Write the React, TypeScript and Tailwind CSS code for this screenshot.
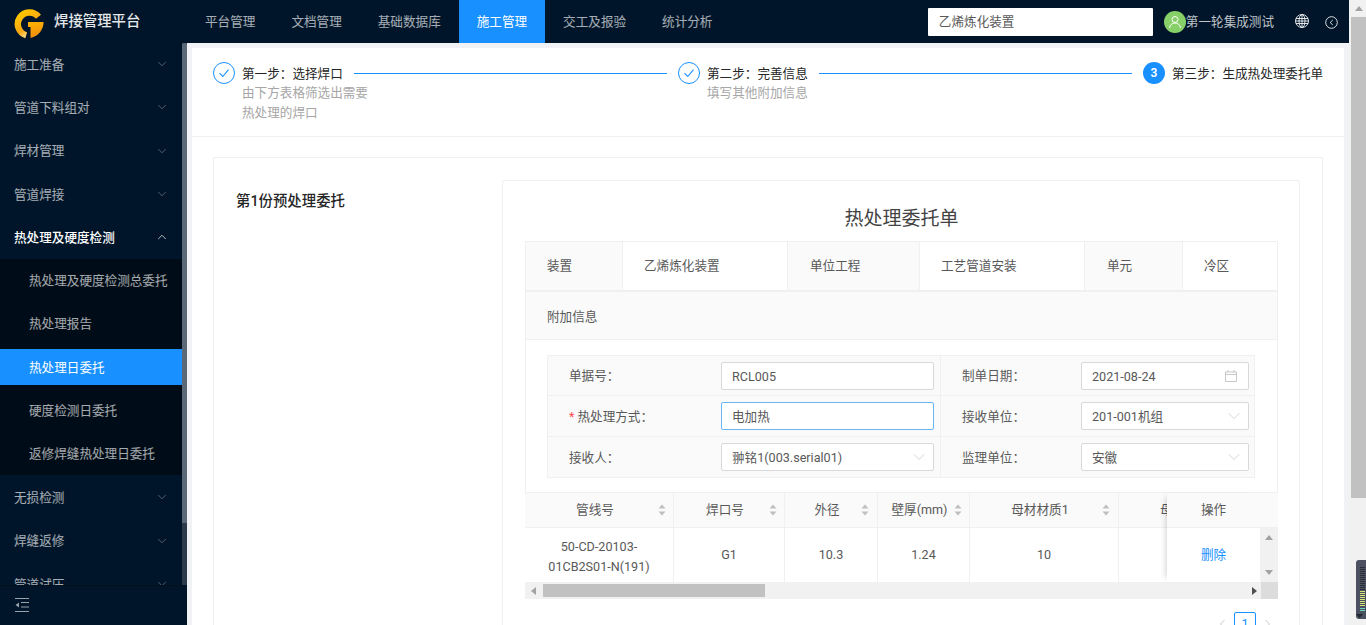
import { ChevronDown, ChevronUp } from 'lucide-react'

const topNav = [
  { label: '平台管理' },
  { label: '文档管理' },
  { label: '基础数据库' },
  { label: '施工管理', active: true },
  { label: '交工及报验' },
  { label: '统计分析' },
]

const menuBefore = ['施工准备', '管道下料组对', '焊材管理', '管道焊接']
const subMenu = [
  { label: '热处理及硬度检测总委托' },
  { label: '热处理报告' },
  { label: '热处理日委托', active: true },
  { label: '硬度检测日委托' },
  { label: '返修焊缝热处理日委托' },
]
const menuAfter = ['无损检测', '焊缝返修', '管道试压']

const columns = [
  { title: '管线号', width: 'w-[149px]', sortClass: 'pr-[7px]' },
  { title: '焊口号', width: 'w-[111px]', sortClass: 'pr-[7px]' },
  { title: '外径', width: 'w-[93px]', sortClass: 'pr-[8px]' },
  { title: '壁厚(mm)', width: 'w-[92px]', sortClass: 'pr-[7px]' },
  { title: '母材材质1', width: 'w-[149px]', sortClass: 'pr-[8px]' },
]

function Logo() {
  return (
    <svg width="32" height="32" viewBox="0 0 32 32" className="mt-[4px] shrink-0">
      <defs>
        <linearGradient id="logoRing" x1="0.1" y1="0.1" x2="0.7" y2="1">
          <stop offset="0" stopColor="#ffc400" />
          <stop offset="0.6" stopColor="#f7a713" />
          <stop offset="1" stopColor="#fff0b0" />
        </linearGradient>
        <linearGradient id="logoBar" x1="0" y1="0" x2="0.2" y2="1">
          <stop offset="0" stopColor="#ffb300" />
          <stop offset="1" stopColor="#f08c10" />
        </linearGradient>
      </defs>
      <path d="M25.5 8.8 A11.6 11.6 0 1 0 13.2 27.2" fill="none" stroke="url(#logoRing)" strokeWidth="6.4" />
      <path d="M15 14 H30.6 C30.6 21 26 28 17.5 30 V19 H15 Z" fill="url(#logoBar)" />
    </svg>
  )
}

function CheckCircle() {
  return (
    <svg width="22" height="22" viewBox="0 0 22 22" className="shrink-0">
      <circle cx="11" cy="11" r="10.5" fill="none" stroke="#1890ff" />
      <path d="M6.5 11.2 L9.8 14.5 L15.5 7.6" fill="none" stroke="#1890ff" strokeWidth="1.1" />
    </svg>
  )
}

function SortIcon() {
  return (
    <svg width="8" height="12" viewBox="0 0 8 12" className="shrink-0">
      <path d="M4 0.5 L7.5 4.5 H0.5 Z" fill="#bfbfbf" />
      <path d="M4 11.5 L7.5 7.5 H0.5 Z" fill="#bfbfbf" />
    </svg>
  )
}

function Arrow({ dir, className }: { dir: 'up' | 'down' | 'left' | 'right'; className?: string }) {
  const paths = {
    up: 'M4 1 L8 6 H0 Z',
    down: 'M4 7 L8 2 H0 Z',
    left: 'M1 4 L6 0 V8 Z',
    right: 'M7 4 L2 0 V8 Z',
  }
  return (
    <svg width="8" height="8" viewBox="0 0 8 8" className={className}>
      <path d={paths[dir]} fill="currentColor" />
    </svg>
  )
}

function MenuRow({ label }: { label: string }) {
  return (
    <div className="flex h-[43.33px] items-center justify-between pl-[14px] pr-[13px] pt-[3px] text-[12.6px] text-white/65">
      <span className="whitespace-nowrap">{label}</span>
      <ChevronDown size={14} strokeWidth={1.2} className="-mt-[2px] text-white/45" />
    </div>
  )
}

function Sidebar() {
  return (
    <aside className="flex h-[582px] w-[187px] shrink-0 flex-col bg-[#001529]">
      <div className="flex h-[542px] overflow-hidden">
        <nav className="-mt-[1px] w-[182px] shrink-0">
          {menuBefore.map((m) => (
            <MenuRow key={m} label={m} />
          ))}
          <div className="flex h-[43.33px] items-center justify-between pl-[14px] pr-[13px] pt-[3px] text-[12.6px] font-medium text-white">
            <span>热处理及硬度检测</span>
            <ChevronUp size={14} strokeWidth={1.2} className="-mt-[2px]" />
          </div>
          <div className="bg-[#000c17]">
            {subMenu.map((s) => (
              <div key={s.label} className="flex h-[43.33px] items-center">
                <div
                  className={
                    s.active
                      ? 'flex h-[36px] w-full items-center bg-[#1890ff] pl-[29px] pt-[2px] text-[12.6px] text-white'
                      : 'flex h-[36px] w-full items-center pl-[29px] pt-[2px] text-[12.6px] text-white/65'
                  }
                >
                  {s.label}
                </div>
              </div>
            ))}
          </div>
          {menuAfter.map((m) => (
            <MenuRow key={m} label={m} />
          ))}
        </nav>
        <div className="h-full w-[5px] bg-[#2b3a4b]">
          <div className="h-[480px] rounded-t-[2px] bg-[#5a6878]" />
        </div>
      </div>
      <div className="flex h-[40px] items-center border-t border-[#00101f] pl-[15px]">
        <svg width="14" height="14" viewBox="0 0 14 14" className="-mt-[2px] text-white/60">
          <path
            d="M0 0.5 H14 M6 4.5 H14 M6 9 H14 M0 13.5 H14"
            stroke="currentColor"
            strokeWidth="1"
            fill="none"
          />
          <path d="M0.5 7 L4 4.5 V9.5 Z" fill="currentColor" />
        </svg>
      </div>
    </aside>
  )
}

function Steps() {
  return (
    <div className="flex h-[89px] border-b border-[#f0f0f0] px-[21px] pt-[14px]">
      <div className="flex w-[465px] shrink-0 items-start gap-[7px]">
        <CheckCircle />
        <div className="min-w-0 flex-1">
          <div className="flex h-[22px] items-center text-[12.6px] text-[#262626]">
            <span className="whitespace-nowrap pt-[2px]">第一步：选择焊口</span>
            <span className="mx-[11px] h-px flex-1 bg-[#1890ff]" />
          </div>
          <div className="-mt-px w-[130px] text-[12.6px] leading-[20px] text-[#a6a6a6]">由下方表格筛选出需要热处理的焊口</div>
        </div>
      </div>
      <div className="flex w-[465px] shrink-0 items-start gap-[7px]">
        <CheckCircle />
        <div className="min-w-0 flex-1">
          <div className="flex h-[22px] items-center text-[12.6px] text-[#262626]">
            <span className="whitespace-nowrap pt-[2px]">第二步：完善信息</span>
            <span className="mx-[11px] h-px flex-1 bg-[#1890ff]" />
          </div>
          <div className="-mt-px text-[12.6px] leading-[20px] text-[#a6a6a6]">填写其他附加信息</div>
        </div>
      </div>
      <div className="flex items-start gap-[7px]">
        <div className="flex h-[22px] w-[22px] items-center justify-center rounded-full bg-[#1890ff] text-[12px] font-semibold text-white">
          3
        </div>
        <div className="flex h-[22px] items-center whitespace-nowrap pt-[2px] text-[12.6px] text-[#262626]">第三步：生成热处理委托单</div>
      </div>
    </div>
  )
}

function Label({ children, required }: { children: React.ReactNode; required?: boolean }) {
  return (
    <div className="flex items-center whitespace-nowrap pt-[2px] text-[12.6px] text-[#595959]">
      {required && <span className="mr-[3px] text-[#ff4d4f]">*</span>}
      {children}
    </div>
  )
}

function Field({
  value,
  focused,
  icon,
  className,
}: {
  value: string
  focused?: boolean
  icon?: 'calendar' | 'chevron'
  className: string
}) {
  return (
    <div
      className={`flex h-[28px] items-center justify-between rounded-[2px] border bg-white pl-[10px] pr-[7px] text-[12.6px] text-[#595959] ${
        focused ? 'border-[#69b4f5]' : 'border-[#d9d9d9]'
      } ${className}`}
    >
      <span className="whitespace-nowrap pt-[3px]">{value}</span>
      {icon === 'chevron' && <ChevronDown size={20} strokeWidth={0.8} className="-mr-[3px] text-[#bfbfbf]" />}
      {icon === 'calendar' && (
        <svg width="12" height="12" viewBox="0 0 12 12" className="mr-[4px]">
          <path
            d="M0.5 2 H11.5 V11.5 H0.5 Z M0.5 4.5 H11.5 M3 0 V2.5 M9 0 V2.5"
            fill="none"
            stroke="#c8c8c8"
          />
        </svg>
      )}
    </div>
  )
}

function FormRow({
  left,
  right,
  height,
}: {
  left: React.ReactNode
  right: React.ReactNode
  height: string
}) {
  return (
    <div className={`flex border-b border-[#f0f0f0] last:border-b-0 ${height}`}>
      <div className="flex w-[393px] items-center justify-between border-r border-[#f0f0f0] pl-[21px] pr-[6px]">{left}</div>
      <div className="flex flex-1 items-center justify-between pl-[21px] pr-[5px]">{right}</div>
    </div>
  )
}

function DescriptionTable() {
  return (
    <div className="border border-[#f0f0f0]">
      <div className="flex h-[50px] border-b-2 border-[#f0f0f0] text-[12.6px] text-[#595959]">
        <div className="flex w-[96px] items-center bg-[#fafafa] pl-[21px]">装置</div>
        <div className="flex w-[166px] items-center border-x border-[#f0f0f0] pl-[21px]">乙烯炼化装置</div>
        <div className="flex w-[131px] items-center bg-[#fafafa] pl-[22px]">单位工程</div>
        <div className="flex w-[166px] items-center border-x border-[#f0f0f0] pl-[21px]">工艺管道安装</div>
        <div className="flex w-[97px] items-center bg-[#fafafa] pl-[22px]">单元</div>
        <div className="flex flex-1 items-center border-l border-[#f0f0f0] pl-[21px]">冷区</div>
      </div>
      <div className="flex h-[48px] items-center border-b border-[#f0f0f0] bg-[#fafafa] pl-[21px] pt-[3px] text-[12.6px] text-[#595959]">附加信息</div>
      <div className="pb-[14px] pl-[21px] pr-[22px] pt-[15px]">
        <div className="border border-[#f0f0f0] bg-[#fafafa]">
          <FormRow
            height="h-[40px]"
            left={
              <>
                <Label>单据号：</Label>
                <Field value="RCL005" className="w-[213px]" />
              </>
            }
            right={
              <>
                <Label>制单日期：</Label>
                <Field value="2021-08-24" icon="calendar" className="w-[168px]" />
              </>
            }
          />
          <FormRow
            height="h-[41px]"
            left={
              <>
                <Label required>热处理方式：</Label>
                <Field value="电加热" focused className="w-[213px]" />
              </>
            }
            right={
              <>
                <Label>接收单位：</Label>
                <Field value="201-001机组" icon="chevron" className="w-[168px]" />
              </>
            }
          />
          <FormRow
            height="h-[40px]"
            left={
              <>
                <Label>接收人：</Label>
                <Field value="翀铭1(003.serial01)" icon="chevron" className="w-[213px]" />
              </>
            }
            right={
              <>
                <Label>监理单位：</Label>
                <Field value="安徽" icon="chevron" className="w-[168px]" />
              </>
            }
          />
        </div>
      </div>
    </div>
  )
}

function WeldTable() {
  return (
    <div className="relative text-[12.6px] text-[#595959]">
      <div className="flex">
        <div className="w-[735px] overflow-hidden">
          <div className="flex h-[35px] w-[800px] border-b border-[#f0f0f0] bg-[#fafafa]">
            {columns.map((c) => (
              <div key={c.title} className={`relative flex items-center justify-center border-r border-[#f0f0f0] pr-[8px] ${c.width}`}>
                <span className="whitespace-nowrap">{c.title}</span>
                <span className={`absolute right-0 ${c.sortClass}`}>
                  <SortIcon />
                </span>
              </div>
            ))}
            <div className="flex w-[48px] items-center overflow-hidden whitespace-nowrap pl-[41px]">母材材质2</div>
          </div>
          <div className="flex h-[54px] w-[800px] leading-[20px]">
            <div className="flex w-[149px] items-center justify-center border-r border-[#f0f0f0] pt-[3px] text-center">
              50-CD-20103-
              <br />
              01CB2S01-N(191)
            </div>
            <div className="flex w-[111px] items-center justify-center border-r border-[#f0f0f0]">G1</div>
            <div className="flex w-[93px] items-center justify-center border-r border-[#f0f0f0]">10.3</div>
            <div className="flex w-[92px] items-center justify-center border-r border-[#f0f0f0]">1.24</div>
            <div className="flex w-[149px] items-center justify-center border-r border-[#f0f0f0]">10</div>
          </div>
        </div>
        <div className="flex-1">
          <div className="h-[35px] border-b border-[#f0f0f0] bg-[#fafafa]" />
          <div className="flex h-[54px] flex-col items-center justify-between bg-[#f1f1f1] py-[6px] text-[#a3a3a3]">
            <Arrow dir="up" />
            <Arrow dir="down" />
          </div>
        </div>
      </div>
      <div className="flex h-[17px]">
        <div className="flex w-[736px] items-center bg-[#f1f1f1] pl-[5px] text-[#505050]">
          <Arrow dir="left" className="text-[#a3a3a3]" />
          <div className="ml-[5px] h-[13px] w-[222px] bg-[#c1c1c1]" />
          <Arrow dir="right" className="ml-auto mr-[3px]" />
        </div>
        <div className="flex-1 bg-[#dcdcdc]" />
      </div>
      {/* fixed column */}
      <div className="absolute left-[642px] top-0 h-[89px] w-[93px] bg-white shadow-[-5px_0_6px_-4px_rgba(0,0,0,0.18)]">
        <div className="flex h-[35px] items-center justify-center border-b border-[#f0f0f0] bg-[#fafafa]">操作</div>
        <div className="flex h-[54px] items-center justify-center text-[#1890ff]">删除</div>
      </div>
    </div>
  )
}

function Pagination() {
  return (
    <div className="mt-[13px] flex items-center justify-end gap-[6px] pr-[6px] text-[12.6px]">
      <svg width="10" height="10" viewBox="0 0 10 10">
        <path d="M6.5 1 L2.5 5 L6.5 9" fill="none" stroke="#c8c8c8" />
      </svg>
      <div className="flex h-[24px] w-[22px] items-center justify-center rounded-[2px] border border-[#1890ff] text-[#1890ff]">1</div>
      <svg width="10" height="10" viewBox="0 0 10 10">
        <path d="M3.5 1 L7.5 5 L3.5 9" fill="none" stroke="#c8c8c8" />
      </svg>
    </div>
  )
}

export default function App() {
  return (
    <div className="relative flex h-[625px] w-[1366px] overflow-hidden bg-[#f0f2f5] [font-family:Roboto,'Noto_Sans_CJK_SC',sans-serif]">
      <div className="flex w-[1349px] shrink-0 flex-col">
        <header className="flex h-[43px] shrink-0 items-center bg-[#001529] pr-[11px]">
          <div className="flex w-[187px] shrink-0 items-center pl-[13px]">
            <Logo />
            <span className="ml-[9px] whitespace-nowrap text-[14.4px] font-medium text-white/90">焊接管理平台</span>
          </div>
          <nav className="flex h-full flex-1">
            {topNav.map((n) => (
              <div
                key={n.label}
                className={
                  n.active
                    ? 'flex h-full shrink-0 items-center whitespace-nowrap bg-[#1890ff] px-[18px] pt-[2px] text-[12.6px] text-white'
                    : 'flex h-full shrink-0 items-center whitespace-nowrap px-[18px] pt-[2px] text-[12.6px] text-white/65'
                }
              >
                {n.label}
              </div>
            ))}
          </nav>
          <div className="flex h-[28px] w-[225px] items-center rounded-[1px] bg-white pl-[11px] pt-[2px] text-[12.6px] text-[#595959]">
            乙烯炼化装置
          </div>
          <div className="ml-[11px] flex h-[22px] w-[22px] items-center justify-center rounded-full bg-[#87d068]">
            <svg width="14" height="14" viewBox="0 0 14 14" fill="none" stroke="white" strokeWidth="1">
              <circle cx="7" cy="4.5" r="3" />
              <path d="M1.5 13 C2 9.5 4.5 8 7 8 C9.5 8 12 9.5 12.5 13" />
            </svg>
          </div>
          <span className="whitespace-nowrap pt-[2px] text-[12.6px] text-white/75">第一轮集成测试</span>
          <svg width="14" height="14" viewBox="0 0 14 14" fill="none" stroke="white" strokeOpacity="0.85" className="-mt-[2px] ml-[21px]">
            <circle cx="7" cy="7" r="6.5" />
            <ellipse cx="7" cy="7" rx="3" ry="6.5" />
            <path d="M7 0.5 V13.5 M1 4.5 H13 M1 9.5 H13 M0.5 7 H13.5" />
          </svg>
          <svg width="13" height="13" viewBox="0 0 13 13" fill="none" stroke="white" strokeOpacity="0.85" className="ml-[16px] mt-[1px]">
            <circle cx="6.5" cy="6.5" r="5.8" />
            <path d="M7.8 4 L5.2 6.5 L7.8 9" />
          </svg>
        </header>
        <div className="flex min-h-0 flex-1">
          <Sidebar />
          <main className="ml-[5px] mt-[5px] h-[640px] w-[1152px] shrink-0 bg-white">
            <Steps />
            <div className="mx-[21px] mt-[20px] flex h-[480px] rounded-[2px] border border-[#f0f0f0] pl-[22px] pr-[22px] pt-[22px]">
              <div className="w-[266px] shrink-0 pt-[12px] text-[14.4px] font-medium leading-[20px] text-[#262626]">
                第1份预处理委托
              </div>
              <div className="h-[470px] w-[798px] shrink-0 rounded-[2px] border border-[#f0f0f0] pl-[22px] pr-[21px]">
                <div className="h-[60px] pt-[25px] text-center text-[19px] leading-[26px] text-[#434343]">热处理委托单</div>
                <DescriptionTable />
                <WeldTable />
                <Pagination />
              </div>
            </div>
          </main>
        </div>
      </div>
      <div className="flex h-full w-[17px] shrink-0 flex-col bg-[#f1f1f1]">
        <div className="flex h-[17px] items-center justify-center pl-[2px] text-[#a3a3a3]">
          <Arrow dir="up" />
        </div>
        <div className="ml-[2px] h-[481px] w-[15px] bg-[#c1c1c1]" />
      </div>
      {/* floating widget over the page scrollbar */}
      <div className="absolute bottom-[6px] right-0 flex h-[59px] w-[10px] flex-col gap-[1px] rounded-l-[3px] bg-[#4b5160] py-[7px] pl-[4px]">
        <div className="h-[24px] w-[5px] bg-[repeating-linear-gradient(#2b2f3a_0_1px,#4b5160_1px_2px)]" />
        <div className="h-[17px] w-[5px] bg-[repeating-linear-gradient(#d6e27a_0_1px,#4b5160_1px_2px)]" />
        <div className="h-[4px] w-[5px] bg-[repeating-linear-gradient(#6fd6c0_0_1px,#4b5160_1px_2px)]" />
        <svg width="7" height="4" viewBox="0 0 7 4" className="absolute bottom-[1px] left-0">
          <path d="M0 0 H7 L3.5 4 Z" fill="#23262e" />
        </svg>
      </div>
    </div>
  )
}
